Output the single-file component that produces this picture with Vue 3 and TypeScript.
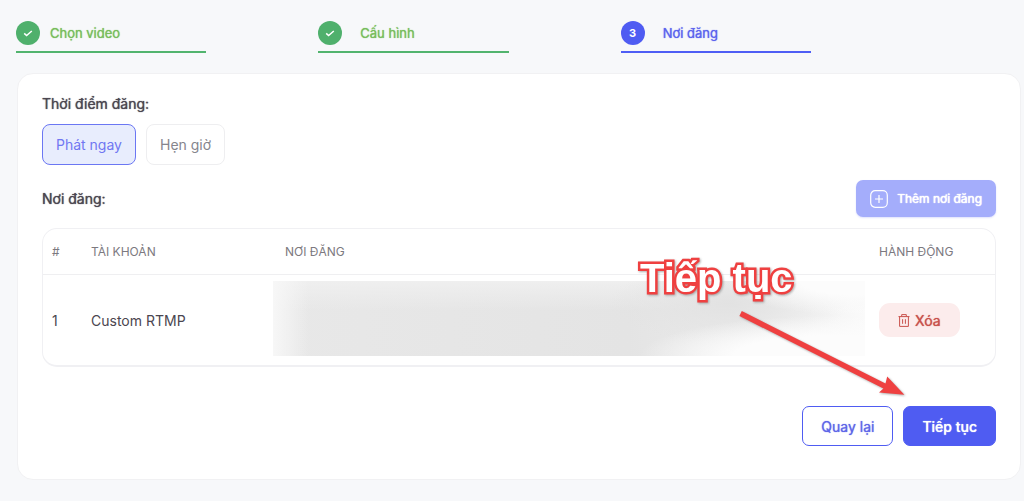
<script setup lang="ts">
import { ref } from 'vue'

interface Step {
  label: string
  done: boolean
}

interface Destination {
  id: number
  account: string
}

const steps: Step[] = [
  { label: 'Chọn video', done: true },
  { label: 'Cấu hình', done: true },
  { label: 'Nơi đăng', done: false },
]

const timings: string[] = ['Phát ngay', 'Hẹn giờ']
const timing = ref<string>('Phát ngay')

const destinations = ref<Destination[]>([{ id: 1, account: 'Custom RTMP' }])

function remove(id: number): void {
  destinations.value = destinations.value.filter((d) => d.id !== id)
}
</script>

<template>
  <main class="page">
    <ol class="steps">
      <li v-for="(step, i) in steps" :key="step.label" class="step" :class="{ done: step.done, first: i === 0 }">
        <span class="badge">
          <svg v-if="step.done" width="10" height="8" viewBox="0 0 10 8" aria-hidden="true">
            <path d="M1.2 4.4 3.6 6.6 8.8 2" fill="none" stroke="currentColor" stroke-width="1.5" />
          </svg>
          <template v-else>{{ i + 1 }}</template>
        </span>
        <span class="step-label">{{ step.label }}</span>
      </li>
    </ol>

    <section class="card">
      <h2 class="heading">Thời điểm đăng:</h2>
      <div class="timings">
        <button
          v-for="t in timings"
          :key="t"
          type="button"
          class="timing"
          :class="{ active: t === timing }"
          :aria-pressed="t === timing"
          @click="timing = t"
        >
          {{ t }}
        </button>
      </div>

      <div class="places-head">
        <h2 class="heading">Nơi đăng:</h2>
        <button type="button" class="add">
          <svg width="18" height="18" viewBox="0 0 18 18" fill="none" stroke="currentColor" aria-hidden="true">
            <rect x="0.7" y="0.7" width="16.6" height="16.6" rx="4.5" stroke-width="1.2" />
            <path d="M9 5v8M5 9h8" stroke-width="1.2" />
          </svg>
          <span>Thêm nơi đăng</span>
        </button>
      </div>

      <div class="table-box">
        <table>
          <thead>
            <tr>
              <th class="col-id">#</th>
              <th class="col-account">TÀI KHOẢN</th>
              <th>NƠI ĐĂNG</th>
              <th class="col-action">HÀNH ĐỘNG</th>
            </tr>
          </thead>
          <tbody>
            <tr v-for="d in destinations" :key="d.id">
              <td class="col-id">{{ d.id }}</td>
              <td class="col-account">{{ d.account }}</td>
              <td class="col-place"><div class="redacted"></div></td>
              <td class="col-action">
                <button type="button" class="delete" @click="remove(d.id)">
                  <svg width="12" height="13" viewBox="0 0 12 13" fill="none" stroke="currentColor" stroke-width="1" aria-hidden="true">
                    <path d="M0.5 2.6h11M3.7 2.4V0.6h4.6v1.8M1.6 2.8v9.6h8.8V2.8M4.6 5.2v4.6M7.4 5.2v4.6" />
                  </svg>
                  <span>Xóa</span>
                </button>
              </td>
            </tr>
          </tbody>
        </table>
      </div>

      <div class="actions">
        <button type="button" class="back">Quay lại</button>
        <button type="button" class="next">Tiếp tục</button>
      </div>

      <div class="callout">
        <span class="callout-text">Tiếp tục</span>
        <svg class="callout-arrow" width="168" height="90" viewBox="0 0 168 90" aria-hidden="true">
          <path d="M3.8 1 147.5 73.4 149.2 66.4 166.4 84.8 141 82.4 145.4 78.6 1.4 6Z" />
        </svg>
      </div>
    </section>
  </main>
</template>

<style>
body {
  margin: 0;
  background: #f7f8fa;
}
</style>

<style scoped>
.page {
  box-sizing: border-box;
  padding: 20px 3px 21px 16px;
  font-family: Inter, "Liberation Sans", sans-serif;
  font-size: 14px;
  color: #4b4650;
}

button {
  font: inherit;
  cursor: pointer;
  box-sizing: border-box;
}

.steps {
  display: grid;
  grid-template-columns: repeat(3, 1fr);
  gap: 112px;
  margin: 0 210px 20px 0;
  padding: 0;
  list-style: none;
}

.step {
  display: flex;
  align-items: center;
  gap: 18px;
  height: 25px;
  padding-bottom: 6px;
  border-bottom: 2px solid #4f5ef5;
  color: #5c63ee;
}

.step.first {
  gap: 10px;
}

.step.done {
  border-color: #52b46e;
  color: #78bd5c;
}

.badge {
  display: flex;
  align-items: center;
  justify-content: center;
  width: 24px;
  height: 24px;
  border-radius: 50%;
  background: #4f5cf2;
  color: #fff;
  font-size: 11px;
  font-weight: 700;
}

.done .badge {
  background: #4fb06c;
}

.step-label {
  font-size: 13px;
  text-shadow: 0 0 1px currentColor;
}

.card {
  position: relative;
  box-sizing: border-box;
  margin-left: 1px;
  padding: 20px 24px 33px;
  border: 1px solid #f1f1f3;
  border-radius: 16px;
  background: #fff;
}

.heading {
  margin: 0;
  font-size: 14px;
  font-weight: 400;
  line-height: 20px;
  text-shadow: 0 0 1px currentColor;
}

.timings {
  display: flex;
  gap: 10px;
  margin: 10px 0 15px;
}

.timing {
  height: 41px;
  padding: 0 13px;
  border: 1px solid #eeeef0;
  border-radius: 8px;
  background: #fff;
  color: #85858d;
}

.timing.active {
  border-color: #6b77f3;
  background: #e8edfd;
  color: #7077f2;
}

.places-head {
  display: flex;
  align-items: center;
  justify-content: space-between;
  margin-bottom: 11px;
}

.add {
  display: flex;
  align-items: center;
  gap: 9px;
  height: 37px;
  padding: 0 14px;
  border: 0;
  border-radius: 7px;
  background: #a4adfb;
  box-shadow: 0 1px 2px #dfe2fd;
  color: #fff;
  font-size: 12px;
  text-shadow: 0 0 1px #fff, 0 0 1px #fff;
}

.table-box {
  border: 1px solid #f0f0f3;
  border-bottom-width: 2px;
  border-radius: 15px;
  overflow: hidden;
}

table {
  width: 100%;
  border-collapse: collapse;
  table-layout: fixed;
}

th,
td {
  padding: 0 12px;
  text-align: left;
}

th {
  height: 45px;
  border-bottom: 1px solid #efeff1;
  color: #7c7980;
  font-size: 12px;
  font-weight: 400;
}

td {
  height: 90px;
}

.col-id {
  width: 27px;
  padding: 0 0 0 9px;
}

.col-account {
  width: 170px;
}

.col-action {
  width: 104px;
}

td.col-place {
  padding: 0 2px 0 0;
}

.redacted {
  height: 75px;
  margin-bottom: 4px;
  background:
    linear-gradient(90deg, #f7f7f7 0, #f7f7f700 6%),
    radial-gradient(ellipse 190px 40px at 94% 100%, #fcfcfc 50%, #fcfcfc00),
    radial-gradient(ellipse 130px 34px at 98% 0, #fcfcfc 40%, #fcfcfc00),
    radial-gradient(ellipse 120px 40px at 77% 30%, #e2e2e2, #e2e2e200),
    linear-gradient(#efefef, #efefef00 40%),
    linear-gradient(90deg, #e8e8e8 0, #e4e4e4 60%, #ececec 82%, #fafafa 100%);
}

.delete {
  display: flex;
  align-items: center;
  gap: 5px;
  height: 34px;
  padding: 0 19px;
  border: 0;
  border-radius: 11px;
  background: #fcecec;
  color: #c9514c;
  text-shadow: 0 0 1px currentColor;
}

.actions {
  display: flex;
  justify-content: flex-end;
  gap: 10px;
  margin-top: 39px;
}

.back,
.next {
  height: 40px;
  padding: 0 18px;
  border: 1px solid #4f5cf2;
  border-radius: 7px;
  text-shadow: 0 0 1px currentColor;
}

.back {
  background: #fff;
  color: #5f66e8;
}

.next {
  background: #4f5cf2;
  color: #fff;
  font-weight: 500;
}

.callout {
  position: absolute;
  top: 179px;
  right: 114px;
  width: 266px;
  height: 147px;
  pointer-events: none;
}

.callout-text {
  position: absolute;
  top: 0;
  left: 0;
  color: #fff;
  font-family: "Liberation Sans", sans-serif;
  font-size: 40px;
  font-weight: 700;
  line-height: 50px;
  white-space: nowrap;
  paint-order: stroke fill;
  -webkit-text-stroke: 5px #ef4040;
  filter: drop-shadow(1px 1px 1px #77777799);
}

.callout-arrow {
  position: absolute;
  right: 0;
  bottom: 0;
  fill: #ef4040;
  filter: drop-shadow(1px 1px 1px #77777799);
}
</style>
